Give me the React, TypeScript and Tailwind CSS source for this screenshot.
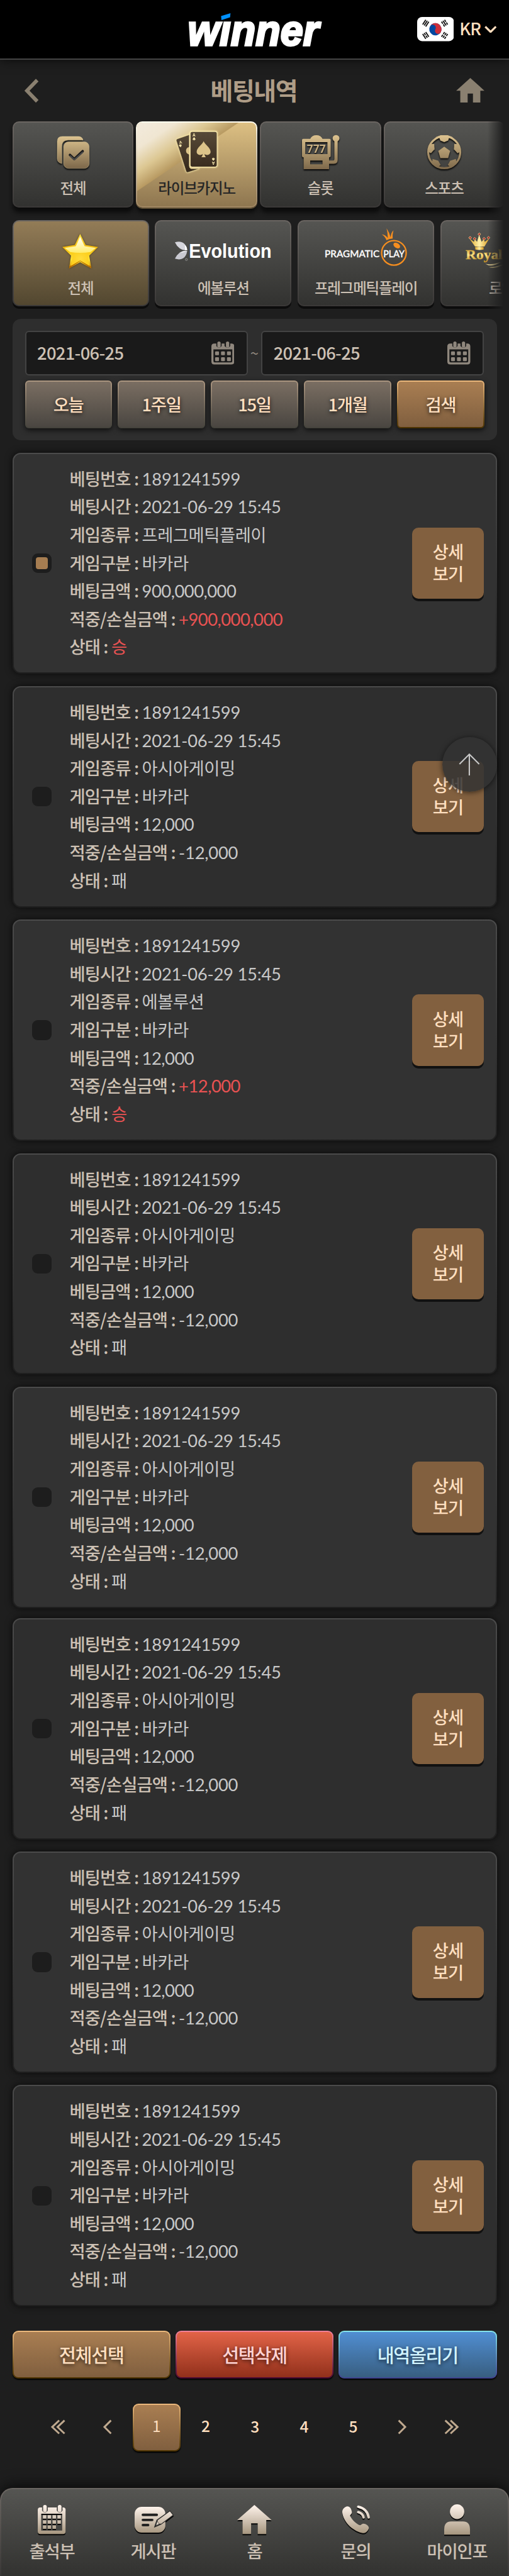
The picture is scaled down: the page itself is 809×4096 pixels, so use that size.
import React from "react";

const KR = "font-['Noto_Sans_CJK_KR',sans-serif]";

type Bet = { game: string; amount: string; result: string; win: boolean };

const lost: Bet = { game: "아시아게이밍", amount: "12,000", result: "-12,000", win: false };

const bets: Bet[] = [
  { game: "프레그메틱플레이", amount: "900,000,000", result: "+900,000,000", win: true },
  lost,
  { game: "에볼루션", amount: "12,000", result: "+12,000", win: true },
  lost,
  lost,
  lost,
  lost,
  lost,
];

function Gold({ id, h, from = "#dcc28f", to = "#7d684a" }: { id: string; h: number; from?: string; to?: string }) {
  return (
    <defs>
      <linearGradient id={id} gradientUnits="userSpaceOnUse" x1="0" y1="0" x2="0" y2={h}>
        <stop offset="0" stopColor={from} />
        <stop offset="1" stopColor={to} />
      </linearGradient>
    </defs>
  );
}

function Logo() {
  return (
    <svg viewBox="0 0 340 90" className="mt-[3px] h-[58.6px] w-[221.5px] overflow-visible" role="img" aria-label="winner">
      <text
        x="7"
        y="81"
        fontFamily="Liberation Sans"
        fontWeight="700"
        fontStyle="italic"
        fontSize="106"
        fill="#fff"
        stroke="#fff"
        strokeWidth="5"
        textLength="320"
        lengthAdjust="spacingAndGlyphs"
      >
        winner
      </text>
      <rect x="74" y="-6" width="46" height="28" fill="#000" />
      <path d="M88 10 111 3 110 13 89 20Z" fill="#0090ff" />
    </svg>
  );
}

function Flag() {
  const bars = (broken: boolean[], x: number, y: number, r: number) => (
    <g transform={`translate(${x} ${y}) rotate(${r})`}>
      {broken.map((b, i) => (
        <path
          key={i}
          d={b ? "M-7 0H-1M1 0H7" : "M-7 0H7"}
          transform={`translate(0 ${(i - 1) * 4.4})`}
          stroke="#111"
          strokeWidth="2.8"
        />
      ))}
    </g>
  );
  return (
    <svg viewBox="0 0 90 59" className="h-[38.4px] w-[58.6px]">
      <rect width="90" height="59" rx="12" fill="#fff" />
      <g transform="rotate(30 44.5 30)">
        <circle cx="44.5" cy="30" r="15" fill="#0047a0" />
        <path d="M29.5 30a15 15 0 0 1 30 0a7.5 7.5 0 0 1-15 0a7.5 7.5 0 0 0-15 0Z" fill="#cd2e3a" />
      </g>
      {bars([false, false, false], 21, 15, -57)}
      {bars([true, false, true], 67, 15, 57)}
      {bars([false, true, false], 21, 45, 57)}
      {bars([true, true, true], 67, 45, -57)}
    </svg>
  );
}

const iconShadow = "[filter:drop-shadow(0_2px_1px_rgba(0,0,0,.9))]";

function AllIcon() {
  return (
    <svg viewBox="0 0 78 78" className={`h-[50.8px] w-[50.8px] overflow-visible ${iconShadow}`}>
      <Gold id="gAll" h={78} />
      <path d="M63 9C62 3 57 0 51 0H12Q0 0 0 12V54Q0 64 11 66V26Q11 9 27 9Z" fill="url(#gAll)" stroke="#ecd9a4" strokeWidth=".7" />
      <rect x="15.5" y="13" width="62.5" height="65" rx="12" fill="url(#gAll)" stroke="#d9c596" strokeWidth=".7" />
      <path d="M31 45 41.5 55 62 36" stroke="#1b1b1b" strokeWidth="6" fill="none" strokeLinecap="round" strokeLinejoin="round" />
      <path d="M32 47.500 41.500 56.500 62 38.500" stroke="#4a4a4a" strokeWidth="3.400" fill="none" strokeLinecap="round" strokeLinejoin="round" />
    </svg>
  );
}

function SpadeShape({ transform, fill }: { transform?: string; fill: string }) {
  return (
    <path
      transform={transform}
      fill={fill}
      d="M17 0C20 8 34 16 34 26C34 33 25 36 19 31Q20 37 22.500 39H11.500Q14 37 15 31C9 36 0 33 0 26C0 16 14 8 17 0Z"
    />
  );
}

function CardsIcon() {
  return (
    <svg viewBox="0 0 101 102" className="h-[66.4px] w-[65.8px] overflow-visible [filter:drop-shadow(0_0_1.500px_#fff0b0)]">
      <Gold id="gCards" h={100} from="#574a38" to="#35281b" />
      <path d="M3 18 32 8V84Q32 90 37 91H57L29 100Q25 101 24 97L0 22Q0 19 3 18Z" fill="url(#gCards)" stroke="#f1dfa0" strokeWidth="1" />
      <path d="M32 38Q24 40 24 47T32 57Z" fill="#dcc48a" />
      <text x="7" y="30" fontSize="10" fontWeight="700" fill="#f8e7ad" fontFamily="Liberation Sans" transform="rotate(-14 10 26)">A</text>
      <SpadeShape fill="#f8e7ad" transform="translate(14.500 38) rotate(166) scale(.2)" />
      <rect x="34" y="0" width="66" height="87" rx="5" fill="url(#gCards)" stroke="#f6e6a9" strokeWidth="2" />
      <SpadeShape fill="#dcc48a" transform="translate(50 24)" />
      <text x="40" y="13" fontSize="10" fontWeight="700" fill="#f8e7ad" fontFamily="Liberation Sans">A</text>
      <SpadeShape fill="#f8e7ad" transform="translate(40.300 14) scale(.2)" />
      <g transform="rotate(180 91 74)">
        <text x="87.500" y="75" fontSize="10" fontWeight="700" fill="#f8e7ad" fontFamily="Liberation Sans">A</text>
        <SpadeShape fill="#f8e7ad" transform="translate(87.800 76) scale(.2)" />
      </g>
    </svg>
  );
}

function SlotIcon() {
  return (
    <svg viewBox="0 0 91 84" className={`h-[54.7px] w-[59.3px] overflow-visible ${iconShadow}`}>
      <Gold id="gSlot" h={84} />
      <path
        fillRule="evenodd"
        fill="url(#gSlot)"
        d="M3 9H20Q24 0 35 0T50 9H67Q70 9 70 12V51Q70 54 66 54V62H75Q79 62 79 58V15A8.300 8.300 0 1 1 87 15V60Q87 70 78 70H66V83H4V54Q0 54 0 51V12Q0 9 3 9ZM8 17V46H62V17ZM20 62V71H50V62Z"
      />
      <text x="12" y="42.500" fontFamily="Roboto" fontWeight="700" fontSize="29" textLength="46" lengthAdjust="spacingAndGlyphs" fill="#cbb182">
        777
      </text>
    </svg>
  );
}

function BallIcon() {
  return (
    <svg viewBox="0 0 83 83" className={`h-[54.1px] w-[54.1px] overflow-visible ${iconShadow}`}>
      <Gold id="gBall" h={83} />
      <circle cx="41.500" cy="41.500" r="39" fill="none" stroke="url(#gBall)" strokeWidth="5" />
      <g fill="url(#gBall)">
        <path d="M41.500 28 56 38.500 51 56H32L27 38.500Z" />
        <path d="M20 5 30 7 32 13 41.500 17 51 13 53 7 63 5 50 0H33Z" />
        <path d="M8 22 17 21 18 34 9 44 2 40Z" />
        <path d="M75 22 66 21 65 34 74 44 81 40Z" />
        <path d="M13 58 27 62 33 73 28 76 35 80 24 79 12 68Z" />
        <path d="M70 58 56 62 50 73 55 76 48 80 59 79 71 68Z" />
      </g>
    </svg>
  );
}

function StarIcon() {
  return (
    <svg viewBox="0 0 88 85" className="h-[55.4px] w-[57.3px] overflow-visible [filter:drop-shadow(0_0_1.500px_rgba(60,40,0,.7))]">
      <defs>
        <linearGradient id="st1" x1="0" y1="0" x2="0" y2="1">
          <stop offset="0" stopColor="#ffe54a" />
          <stop offset=".4" stopColor="#f2b90a" />
          <stop offset=".75" stopColor="#ffe53a" />
          <stop offset="1" stopColor="#c77b00" />
        </linearGradient>
        <radialGradient id="st2" cx=".5" cy=".75" r=".5">
          <stop offset="0" stopColor="#ffdc3c" />
          <stop offset="1" stopColor="#fbc708" />
        </radialGradient>
        <linearGradient id="st3" x1="0" y1="0" x2="0" y2="1">
          <stop offset="0" stopColor="#fff" />
          <stop offset="1" stopColor="#ffec6a" />
        </linearGradient>
      </defs>
      <path d="M43.600 0 57 27 87.500 32 65.700 53 71 84 43.500 69 16.600 84 21.400 53 0 32 30.500 27Z" fill="url(#st1)" />
      <path d="M43.500 66 16.600 84 17.500 79 43.500 64 70 79 71 84Z" fill="#b56b00" />
      <path d="M43.600 7 54.500 30 82 34 62 52 66.500 78 43.500 65 21 78 25.400 52 6 34 33 30Z" fill="url(#st2)" />
      <path d="M43.600 7 54.500 30 82 34 69 44Q43.500 48 19 44L6 34 33 30Z" fill="url(#st3)" />
    </svg>
  );
}

function EvolutionLogo() {
  return (
    <svg viewBox="0 0 236 48" className="h-[31.3px] w-[153.7px] overflow-visible">
      <path d="M0 2Q12 -2 20 3T30 21Q20 23 12 17T0 2Z" fill="#d5d5dc" />
      <path d="M24 8Q30 13 30 21H25Z" fill="#fff" />
      <path d="M0 42Q12 46 20 41T30 23Q20 21 12 27T0 42Z" fill="#c9c9d1" />
      <path d="M30 23Q20 22 12 28Q22 27 30 23Z" fill="#f3f3f5" />
      <circle cx="28" cy="44" r="2.500" fill="none" stroke="#ccc" strokeWidth=".8" />
      <text x="34" y="40" fontFamily="Liberation Sans" fontWeight="700" fontSize="49" fill="#fff" textLength="202" lengthAdjust="spacingAndGlyphs">
        Evolution
      </text>
    </svg>
  );
}

function PragmaticLogo() {
  return (
    <svg viewBox="0 0 204 94" className="h-[61.2px] w-[132.9px] overflow-visible">
      <circle cx="169" cy="60" r="30" fill="none" stroke="#f68e1f" strokeWidth="3.500" />
      <ellipse cx="176" cy="42" rx="9" ry="6" fill="#f68e1f" transform="rotate(35 176 42)" />
      <path d="M151 29Q146 18 139 15Q149 16 154 24Q154 10 151 0Q158 10 161 22Q162 10 168 5Q165 15 166 25Q158 25 151 29Z" fill="#f68e1f" />
      <text x="0" y="70" fontFamily="Lato" fontWeight="500" fontSize="24" fill="#fff" stroke="#fff" strokeWidth=".5" textLength="134" lengthAdjust="spacingAndGlyphs">
        PRAGMATIC
      </text>
      <text x="143" y="70" fontFamily="Lato" fontWeight="500" fontSize="24" fill="#fff" stroke="#fff" strokeWidth=".5" textLength="52" lengthAdjust="spacingAndGlyphs">
        PLAY
      </text>
    </svg>
  );
}

function RoyalLogo() {
  return (
    <svg viewBox="0 0 220 90" className="h-[58.6px] w-[143.3px] overflow-visible">
      <defs>
        <linearGradient id="ry" x1="0" y1="0" x2="1" y2="0">
          <stop offset="0" stopColor="#e0a92c" />
          <stop offset=".5" stopColor="#fff0a8" />
          <stop offset="1" stopColor="#d79a1e" />
        </linearGradient>
        <linearGradient id="ry2" x1="0" y1="0" x2="0" y2="1">
          <stop offset="0" stopColor="#c58b14" />
          <stop offset=".5" stopColor="#ffe991" />
          <stop offset="1" stopColor="#b87f12" />
        </linearGradient>
      </defs>
      <g transform="scale(1 .82)">
        <path d="M9 17 20 27 23 20 28 27 33 6 39 27 44 20 47 27 58 17 46 41H23Z" fill="url(#ry)" />
        <path d="M23 43Q33 40 44 43V50Q33 53 24 50Z" fill="url(#ry)" />
        {[
          [11, 15],
          [22, 18],
          [33.5, 4.500],
          [45, 18],
          [56, 15],
        ].map(([x, y]) => (
          <path key={x} d={`M${x} ${y - 4}l3.500 4l-3.500 4l-3.500-4Z`} fill="#b3202c" stroke="#f2d98a" strokeWidth="1.500" />
        ))}
      </g>
      <text x="0" y="64" fontFamily="Liberation Serif" fontWeight="700" fontSize="31" fill="url(#ry2)" stroke="#d9a83a" strokeWidth=".6" textLength="90" lengthAdjust="spacingAndGlyphs">
        Royal
      </text>
      <path d="M48 76Q62 85 80 75T118 71Q100 67 82 73T48 76Z" fill="#d9c68e" />
      <path d="M56 84Q70 89 86 81T118 77Q100 75 84 80T56 84Z" fill="#b9a878" />
    </svg>
  );
}

function DateIcon() {
  return (
    <svg viewBox="0 0 56 56" className="h-[36.5px] w-[36.5px]" fill="#8f877d">
      <path fillRule="evenodd" d="M7 5H12V11Q18.500 20 25 11V5H32V11Q40 20 46 11V5H49Q56 5 56 12V49Q56 56 49 56H7Q0 56 0 49V12Q0 5 7 5ZM5 19V48Q5 51 8 51H48Q51 51 51 48V19Z" />
      <rect x="14.500" y="0" width="8" height="15" rx="4" />
      <rect x="35.500" y="0" width="8" height="15" rx="4" />
      {[24, 38.500].map((y) => [9, 23.500, 38].map((x) => <rect key={`${x}-${y}`} x={x} y={y} width="9.500" height="9.500" rx="2" />))}
    </svg>
  );
}

const navShadow = "overflow-visible [filter:drop-shadow(0_2px_.700px_rgba(0,0,0,.9))]";

function NavCalendar() {
  return (
    <svg viewBox="0 0 68 71" className={`h-[46.2px] w-[44.3px] ${navShadow}`} fill="url(#n1)">
      <Gold id="n1" h={71} from="#fff4ec" to="#a6967f" />
      <path fillRule="evenodd" d="M6 6H10.500V14Q17.500 24 24.500 14V6H46.500V14Q53.500 24 60.500 14V6H62Q68 6 68 12V65Q68 71 62 71H6Q0 71 0 65V12Q0 6 6 6ZM8.500 21.500V62.500H59.500V21.500Z" />
      <rect x="13" y="0" width="9" height="18" rx="4.500" />
      <rect x="49" y="0" width="9" height="18" rx="4.500" />
      {[25, 37.500, 50].map((y) =>
        [12.500, 24, 36, 48]
          .filter((x) => !(y === 50 && x === 48))
          .map((x) => <rect key={`${x}-${y}`} x={x} y={y} width="8.500" height="8.500" />)
      )}
    </svg>
  );
}

function NavBoard() {
  return (
    <svg viewBox="0 0 92 64" className={`h-[41.7px] w-[59.9px] ${navShadow}`}>
      <Gold id="n2" h={64} from="#fff4ec" to="#a6967f" />
      <rect width="75" height="63" rx="17" fill="url(#n2)" />
      <path d="M20 19.500H54M20 32H43M20 44.500H33" stroke="#222" strokeWidth="6" strokeLinecap="round" />
      <path d="M86 11 93 20 64 42 50 48 55 33Z" fill="url(#n2)" stroke="#2c2c2b" strokeWidth="3.500" />
      <path d="M86 11 93 20 64 42 56 33Z" fill="url(#n2)" />
      <path d="M55 35 60 42 52 46Z" fill="#e0d5c8" stroke="#333" strokeWidth="1" />
    </svg>
  );
}

function NavHome() {
  return (
    <svg viewBox="0 0 84 71" className={`h-[46.2px] w-[54.7px] ${navShadow}`}>
      <Gold id="n3" h={71} from="#fff4ec" to="#a6967f" />
      <path d="M42 0 84 37H71V71H50V45H34V71H13V37H0Z" fill="url(#n3)" />
    </svg>
  );
}

function NavPhone() {
  return (
    <svg viewBox="0 0 67 69" className={`h-[44.9px] w-[43.6px] ${navShadow}`}>
      <Gold id="n4" h={69} from="#fff4ec" to="#a6967f" />
      <path d="M12 2C5 4 0 9 0 16C2 38 22 60 48 67C56 69 64 62 65 54C64 49 58 44 51 44C48 44 46 48 43 48C35 46 22 33 19 25C20 22 25 20 23 14C22 7 18 2 12 2Z" fill="url(#n4)" />
      <path d="M39 3Q61 8 64.500 29" fill="none" stroke="url(#n4)" strokeWidth="6" strokeLinecap="round" />
      <path d="M39 16Q50 19 52 29" fill="none" stroke="url(#n4)" strokeWidth="6" strokeLinecap="round" />
    </svg>
  );
}

function NavUser() {
  return (
    <svg viewBox="0 0 63 74" className={`h-[48.2px] w-[41px] ${navShadow}`}>
      <Gold id="n5" h={74} from="#fff4ec" to="#a6967f" />
      <ellipse cx="31.500" cy="18" rx="17.500" ry="18" fill="url(#n5)" />
      <path d="M0 74V62Q0 42 17 42H46Q63 42 63 62V74Z" fill="url(#n5)" />
    </svg>
  );
}

function Chevron({ d, w = 20 }: { d: string; w?: number }) {
  return (
    <svg viewBox={`0 0 ${w} 34`} className="mb-[1.600px] h-[22.2px] overflow-visible" fill="none" stroke="#bfa98f" strokeWidth="4.500">
      <path d={d} />
    </svg>
  );
}

const greyFace =
  "border-2 border-transparent [background:linear-gradient(#555552,#323230)_padding-box,linear-gradient(#6b6662,#3a3837)_border-box]";
const tanFace =
  "border-2 border-transparent [background:linear-gradient(#a97e52,#805f3f)_padding-box,linear-gradient(#ecb97d,#4b3200)_border-box]";

const categories = [
  { label: "전체", icon: <AllIcon /> },
  { label: "라이브카지노", icon: <CardsIcon />, active: true },
  { label: "슬롯", icon: <SlotIcon /> },
  { label: "스포츠", icon: <BallIcon /> },
];

const providers = [
  { label: "전체", icon: <StarIcon />, active: true, pad: "pt-[14px]", text: "" },
  { label: "에볼루션", icon: <EvolutionLogo />, pad: "pt-[13px]", text: "" },
  { label: "프레그메틱플레이", icon: <PragmaticLogo />, pad: "pt-[1px] pl-[2px]", text: "" },
  { label: "로얄", icon: <RoyalLogo />, pad: "pt-[13px] pl-[7px]", text: "pr-[22px]" },
];

function DateField() {
  return (
    <div className="flex h-[70.4px] w-[354.3px] items-center justify-between rounded-[6px] border-2 border-[#434343] bg-[#1a1a1a] pr-[19.500px] pl-[17.500px]">
      <span className="pb-[2.600px] text-[27.36px] font-medium tracking-[-0.7px] text-[#cdc1b4]">2021-06-25</span>
      <DateIcon />
    </div>
  );
}

function Field({ label, value, win = false, wide = false }: { label: string; value: string; win?: boolean; wide?: boolean }) {
  return (
    <div className="h-[44.63px] text-[27.36px] leading-[44.63px] whitespace-nowrap">
      <span className="font-medium tracking-[-0.85px] text-[#cdc1b4]">{label} : </span>
      <span
        className={`font-['Lato','Noto_Sans_CJK_KR',sans-serif] ${wide ? "tracking-[-0.220px]" : "tracking-[-0.5px]"} ${
          win ? "text-[#e95252]" : "text-[#c8c8c8]"
        }`}
      >
        {value}
      </span>
    </div>
  );
}

function BetCard({ bet, index }: { bet: Bet; index: number }) {
  return (
    <article
      className={`flex h-[351.75px] items-center rounded-[13px] border-2 border-transparent pr-[18.800px] pl-[29.300px] shadow-[0_0_12px_rgba(0,0,0,.7)] ${
        index === 0 ? "" : index === 5 ? "mt-[16.280px]" : "mt-[19.540px]"
      } ${
        index % 2 === 0
          ? "[background:linear-gradient(#323232,#323232)_padding-box,linear-gradient(#4b4b4b,#1f1f1f)_border-box]"
          : "[background:linear-gradient(#2e2e2e,#2e2e2e)_padding-box,linear-gradient(#4b4b4b,#1f1f1f)_border-box]"
      }`}
    >
      <span className="flex size-[31.300px] items-center justify-center rounded-[9px] bg-[#1d1d1d]">
        {index === 0 && <span className="size-[19.500px] rounded-[4px] bg-[#a67d51]" />}
      </span>
      <div className="ml-[28.300px] flex-1 pb-[3.400px]">
        <Field label="베팅번호" value="1891241599" wide />
        <Field label="베팅시간" value="2021-06-29 15:45" wide />
        <Field label="게임종류" value={bet.game} />
        <Field label="게임구분" value="바카라" />
        <Field label="베팅금액" value={bet.amount} />
        <Field label="적중/손실금액" value={bet.result} win={bet.win} wide={!bet.win} />
        <Field label="상태" value={bet.win ? "승" : "패"} win={bet.win} />
      </div>
      <button className="h-[113.300px] w-[113.300px] rounded-[10px] bg-[#82603f] pb-[3px] text-[27.36px] leading-[35px] font-medium tracking-[-0.85px] text-[#ffdfbf] shadow-[0_4px_0_#111]">
        상세
        <br />
        보기
      </button>
    </article>
  );
}

function Fade() {
  return <div className="absolute inset-y-0 right-0 w-[34px] bg-linear-to-r from-transparent to-[#1e1e1e] to-75%" />;
}

export default function App() {
  return (
    <div className={`flex h-[4096px] w-[809px] flex-col overflow-hidden bg-[#1e1e1e] ${KR}`}>
      <header className="grid h-[95px] shrink-0 grid-cols-[1fr_auto_1fr] items-center border-b-2 border-[#444] bg-black shadow-[0_0_16px_rgba(0,0,0,.7)]">
        <span />
        <Logo />
        <div className="flex items-center justify-end pr-[20px]">
          <Flag />
          <span className="ml-[9px] pb-[3px] text-[27px] leading-none font-medium tracking-[-1px] text-[#ffdfbf]">KR</span>
          <svg viewBox="0 0 30 18" className="ml-[5.500px] h-[11.700px] w-[19.500px]" fill="none" stroke="#ffdfbf" strokeWidth="5">
            <path d="M2 2 15 15 28 2" />
          </svg>
        </div>
      </header>

      <div className="flex h-[97.800px] shrink-0 items-center justify-between pr-[39px] pl-[38.500px]">
        <svg viewBox="0 0 34 56" className="h-[36.500px] w-[22.100px] overflow-visible" fill="none" stroke="#8a8070" strokeWidth="9">
          <path d="M31 2 6 28 31 54" />
        </svg>
        <h1 className="ml-[21px] pb-[3px] text-[39px] leading-none font-bold tracking-[-1.500px] text-[#af9d87]">베팅내역</h1>
        <svg viewBox="0 0 69 60" className="h-[39px] w-[45px]" fill="#8a8070">
          <path d="M34.500 0 69 31H59V60H41V38H28V60H10V31H0Z" />
        </svg>
      </div>

      <nav className="relative flex h-[156.800px] shrink-0 gap-[3.900px] overflow-hidden pl-[19.500px]">
        {categories.map((c) => (
          <div
            key={c.label}
            className={`flex h-[137.400px] w-[192.800px] shrink-0 flex-col items-center rounded-[10px] ${
              c.active
                ? "border-2 border-transparent shadow-[0_2px_0_#5f4f35,0_8px_6px_#0c0c0c] [background:linear-gradient(146deg,#f3ebdd_0%,#f0e6d2_16%,#dcc792_30%,#b89a62_41.500%,transparent_42%)_padding-box,linear-gradient(#ddc083,#8e7650)_padding-box,linear-gradient(#fffdf0,#a08662)_border-box]"
                : `${greyFace} shadow-[0_8px_6px_#0c0c0c]`
            }`}
          >
            <div className="flex h-[81.600px] items-center justify-center pt-[13px]">{c.icon}</div>
            <span className={`text-[23.500px] leading-[44px] font-medium tracking-[-1.200px] ${c.active ? "text-[#262626]" : "text-[#cdc1b4]"}`}>
              {c.label}
            </span>
          </div>
        ))}
        <Fade />
      </nav>

      <nav className="relative flex h-[157.200px] shrink-0 gap-[9.800px] overflow-hidden pl-[19.500px]">
        {providers.map((p, i) => (
          <div
            key={i}
            className={`flex h-[137.600px] w-[217px] shrink-0 flex-col items-center rounded-[10px] shadow-[0_4px_0_#0c0c0c] ${
              p.active
                ? "border-2 border-transparent [background:linear-gradient(#937c57,#524730)_padding-box,linear-gradient(#6b6662,#3a3837)_border-box]"
                : greyFace
            }`}
          >
            <div className={`flex h-[83px] items-center justify-center ${p.pad}`}>{p.icon}</div>
            <span className={`text-[23.500px] leading-[44px] font-medium tracking-[-1.200px] text-[#cdc1b4] ${p.text}`}>{p.label}</span>
          </div>
        ))}
        <Fade />
      </nav>

      <section className="mx-[19.500px] h-[193.400px] shrink-0 rounded-[13px] bg-[#2e2e2e] px-[20px] pt-[19.500px]">
        <div className="flex items-center justify-between">
          <DateField />
          <span className="text-[24px] leading-none text-[#8f877d]">~</span>
          <DateField />
        </div>
        <div className="mt-[8px] grid grid-cols-5 gap-[9.800px]">
          {["오늘", "1주일", "15일", "1개월", "검색"].map((t) => (
            <button
              key={t}
              className={`h-[76.200px] rounded-[6px] text-[27.36px] font-medium tracking-[-1.300px] text-[#ffdfbf] shadow-[0_3px_8px_rgba(0,0,0,.7)] [text-shadow:0_2px_6px_rgba(0,0,0,.8)] ${
                t === "검색"
                  ? tanFace
                  : "border-2 border-transparent [background:linear-gradient(#7a6e62,#4a4641)_padding-box,linear-gradient(#ab9680,#43423b)_border-box]"
              }`}
            >
              {t}
            </button>
          ))}
        </div>
      </section>

      <main className="relative mx-[19.500px] mt-[19.500px] shrink-0">
        {bets.map((b, i) => (
          <BetCard key={i} bet={b} index={i} />
        ))}
        <button className="absolute top-[452.700px] right-0 flex size-[87px] items-center justify-center rounded-full bg-[#323232]/85 shadow-[0_1px_8px_rgba(0,0,0,.6)]">
          <svg viewBox="0 0 52 54" className="h-[35.200px] w-[33.900px]" fill="none" stroke="#c8c8c8" strokeWidth="3.200">
            <path d="M2 26 26 2 50 26M26 2V54" />
          </svg>
        </button>
      </main>

      <div className="mx-[19.500px] mt-[39px] grid shrink-0 grid-cols-3 gap-[7.800px]">
        <button className={`${tanFace} h-[76.200px] rounded-[9px] pb-[1px] text-[29.300px] font-medium tracking-[-1.300px] text-[#ffdfbf] shadow-[0_2px_2px_#000] [text-shadow:0_2px_6px_rgba(0,0,0,.7)]`}>
          전체선택
        </button>
        <button className="h-[76.200px] rounded-[9px] border-2 border-transparent pb-[1px] text-[29.300px] font-medium tracking-[-1.300px] text-[#ffd3d3] shadow-[0_2px_2px_#000] [background:linear-gradient(#e26347,#91301b)_padding-box,linear-gradient(#f0819a,#480831)_border-box] [text-shadow:0_2px_6px_rgba(0,0,0,.7)]">
          선택삭제
        </button>
        <button className="h-[76.200px] rounded-[9px] border-2 border-transparent pb-[1px] text-[29.300px] font-medium tracking-[-1.300px] text-[#d0f3ff] shadow-[0_2px_2px_#000] [background:linear-gradient(#508ed2,#385e80)_padding-box,linear-gradient(#84e4ea,#3f418f)_border-box] [text-shadow:0_2px_6px_rgba(0,0,0,.7)]">
          내역올리기
        </button>
      </div>

      <div className="mt-[39.500px] ml-[53.500px] grid h-[75.800px] w-[703.500px] shrink-0 grid-cols-9 items-center justify-items-center text-[24.500px] font-medium text-[#ffdfbf]">
        <Chevron w={34} d="M20 1 3 17 20 33M33 1 16 17 33 33" />
        <Chevron d="M19 1 3 17 19 33" />
        <span className={`${tanFace} flex h-[75.800px] w-[75.800px] items-center justify-center rounded-[9px] pb-[5px] font-normal shadow-[0_2px_2px_#000]`}>1</span>
        <span className="pb-[5px]">2</span>
        <span className="pb-[2px]">3</span>
        <span className="pb-[2px]">4</span>
        <span className="pb-[2px]">5</span>
        <Chevron d="M1 1 17 17 1 33" />
        <Chevron w={34} d="M1 1 18 17 1 33M14 1 31 17 14 33" />
      </div>

      <footer className="mt-auto grid h-[139.600px] shrink-0 grid-cols-5 rounded-t-[20px] border-2 border-b-0 border-transparent shadow-[0_-2px_24px_rgba(0,0,0,.8)] [background:linear-gradient(#555552,#323230)_padding-box,linear-gradient(#6b6662,#3a3837)_border-box]">
        {[
          { t: "출석부", i: <NavCalendar /> },
          { t: "게시판", i: <NavBoard /> },
          { t: "홈", i: <NavHome /> },
          { t: "문의", i: <NavPhone /> },
          { t: "마이인포", i: <NavUser /> },
        ].map((n) => (
          <div key={n.t} className="flex flex-col items-center pt-[22px]">
            <div className="flex h-[52px] items-center">{n.i}</div>
            <span className="text-[27.36px] leading-[47px] font-medium tracking-[-1.200px] text-[#cdc1b4]">{n.t}</span>
          </div>
        ))}
      </footer>
    </div>
  );
}
